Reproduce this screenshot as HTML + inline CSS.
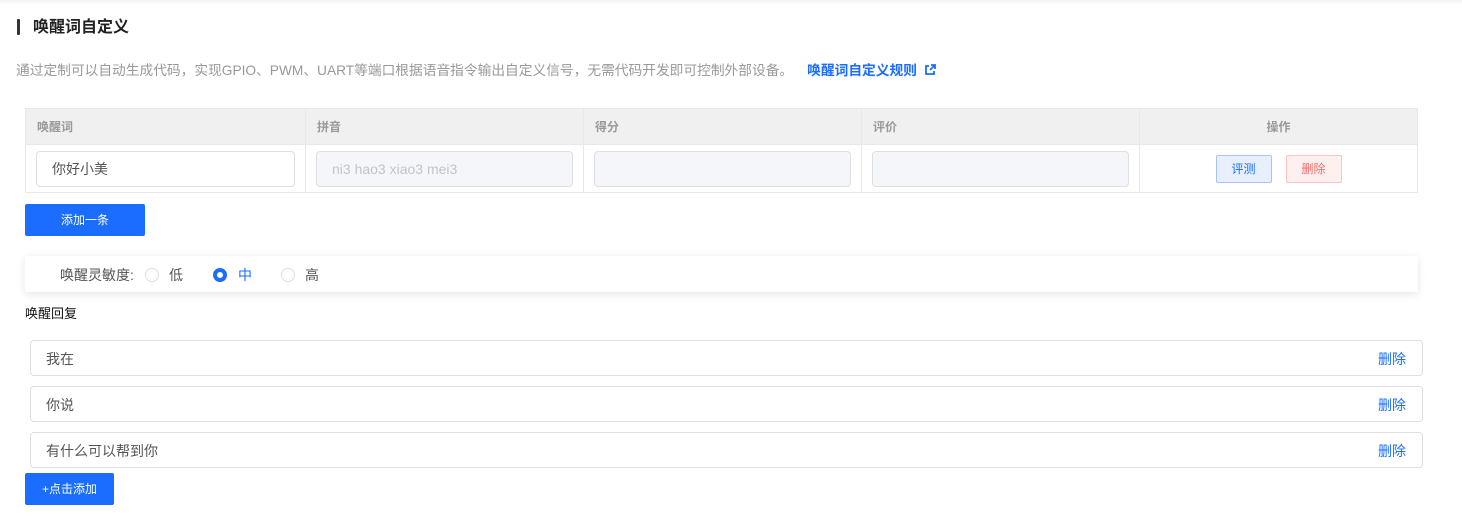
<!DOCTYPE html>
<html><head><meta charset="utf-8"><style>
*{box-sizing:border-box;margin:0;padding:0}
body{width:1462px;height:517px;background:#fff;font-family:"Liberation Sans","Noto Sans CJK SC",sans-serif;position:relative;overflow:hidden;color:#333}
.a{position:absolute}
.bar{left:17px;top:19px;width:3px;height:16px;background:#333;border-radius:1px}
.title{left:33px;top:18px;font-size:16px;font-weight:bold;color:#222;line-height:20px}
.desc{left:16px;top:61px;font-size:13.73px;color:#999;line-height:19px;white-space:nowrap}
.desc b{color:#1a6dff;margin-left:14px}
table{position:absolute;left:25px;top:108px;width:1393px;border-collapse:collapse}
th{height:36px;background:#f0f0f0;font-size:12px;color:#999;text-align:left;padding-left:11px;border:1px solid #e8e8ec;font-weight:bold}
td{height:48px;border:1px solid #e8e8ec;padding:0 10px}
.inp{height:36px;border:1px solid #dcdfe6;border-radius:4px;font-size:14px;line-height:34px;padding-left:15px;color:#555}
.dis{background:#f5f6fa;color:#c0c4cc}
.btn{display:inline-block;width:56px;height:28px;border:1px solid;border-radius:2px;font-size:12px;line-height:26px;text-align:center}
.blue{background:#1a6dff;color:#fff;font-size:12px;text-align:center;border-radius:2px}
.panel{left:25px;top:256px;width:1393px;height:36px;box-shadow:0 2px 8px rgba(0,0,0,.1);font-size:14px;color:#555;line-height:38px}
.r{position:absolute;top:12px;width:14px;height:14px;border-radius:50%;border:1px solid #dcdfe6}
.item{left:30px;width:1393px;height:36px;border:1px solid #dcdfe6;border-radius:4px;font-size:14px;color:#555;line-height:37px;padding-left:15px}
.item span{position:absolute;right:16px;color:#1a6dff;font-size:14px}
</style></head><body>
<div class="a" style="left:0;top:0;width:1462px;height:4px;background:linear-gradient(#f3f3f3,#fff)"></div>
<div class="a bar"></div>
<div class="a title">唤醒词自定义</div>
<div class="a desc">通过定制可以自动生成代码，实现GPIO、PWM、UART等端口根据语音指令输出自定义信号，无需代码开发即可控制外部设备。<b>唤醒词自定义规则</b> <svg width="12" height="12" viewBox="0 0 12 12" style="vertical-align:-1px;margin-left:3px"><path d="M5 2H2v8h8V7" fill="none" stroke="#1a6dff" stroke-width="1.8"/><path d="M7 1h4v4M11 1L6 6" fill="none" stroke="#1a6dff" stroke-width="1.8"/></svg></div>
<table>
<tr><th style="width:280px">唤醒词</th><th style="width:278px">拼音</th><th style="width:278px">得分</th><th style="width:278px">评价</th><th style="text-align:center;padding:0">操作</th></tr>
<tr><td><div class="inp">你好小美</div></td><td><div class="inp dis">ni3 hao3 xiao3 mei3</div></td><td><div class="inp dis"></div></td><td><div class="inp dis"></div></td>
<td style="text-align:center"><span class="btn" style="background:#e8f0ff;border-color:#a6c4ff;color:#1a6dff">评测</span><span class="btn" style="margin-left:14px;background:#fff0f0;border-color:#ffc4c4;color:#f56c6c">删除</span></td></tr>
</table>
<div class="a blue" style="left:25px;top:204px;width:120px;height:32px;line-height:32px">添加一条</div>
<div class="a panel"><span class="a" style="left:35px">唤醒灵敏度:</span>
<span class="r" style="left:120px"></span><span class="a" style="left:144px">低</span>
<span class="r" style="left:188px;border:4px solid #1a6dff"></span><span class="a" style="left:213px;color:#1a6dff">中</span>
<span class="r" style="left:256px"></span><span class="a" style="left:280px">高</span></div>
<div class="a" style="left:25px;font-size:13px;color:#111;line-height:20px;top:304px">唤醒回复</div>
<div class="a item" style="top:340px">我在<span>删除</span></div>
<div class="a item" style="top:386px">你说<span>删除</span></div>
<div class="a item" style="top:432px">有什么可以帮到你<span>删除</span></div>
<div class="a blue" style="left:25px;top:473px;width:89px;height:32px;line-height:32px">+点击添加</div>
</body></html>
